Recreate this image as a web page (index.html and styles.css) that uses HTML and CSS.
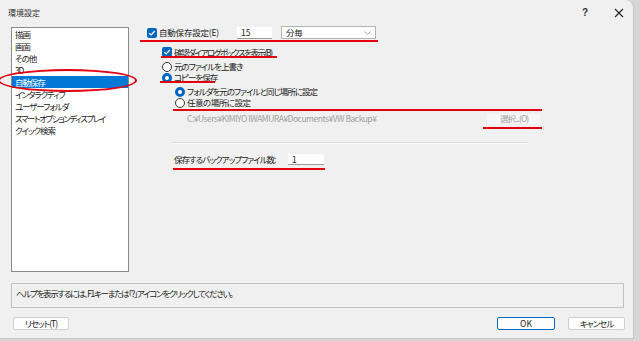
FILE: index.html
```html
<!DOCTYPE html>
<html lang="ja">
<head>
<meta charset="utf-8">
<title>環境設定</title>
<link rel="stylesheet" href="styles.css">
</head>
<body>
<div class="window">
  <div class="titlebar">
    <span class="title">環境設定</span>
    <span class="help-q">?</span>
    <svg class="close" width="10" height="10" viewBox="0 0 10 10"><path d="M1 1L9 9M9 1L1 9" stroke="#222" stroke-width="1.1" fill="none"/></svg>
  </div>
  <div class="main">
    <ul class="list">
      <li>描画</li>
      <li>画面</li>
      <li>その他</li>
      <li>3D</li>
      <li class="sel">自動保存</li>
      <li>インタラクティブ</li>
      <li>ユーザーフォルダ</li>
      <li class="tight">スマートオプションディスプレイ</li>
      <li>クイック検索</li>
    </ul>
    <div class="panel">
      <div class="row r1">
        <span class="cb"><svg width="8" height="8" viewBox="0 0 8 8"><path d="M1.3 4.2L3.2 6L6.8 2" stroke="#fff" stroke-width="1.2" fill="none"/></svg></span>
        <span class="lbl l1 kj">自動保存設定(E)</span>
        <span class="tb tb15">15</span>
        <span class="select kj">分毎<svg class="chev" width="7" height="4" viewBox="0 0 7 4"><path d="M0.5 0.5L3.5 3.3L6.5 0.5" stroke="#999" stroke-width="0.9" fill="none"/></svg></span>
      </div>
      <div class="row r2">
        <span class="cb"><svg width="8" height="8" viewBox="0 0 8 8"><path d="M1.3 4.2L3.2 6L6.8 2" stroke="#fff" stroke-width="1.2" fill="none"/></svg></span>
        <span class="lbl tight">確認ダイアログボックスを表示(B)</span>
      </div>
      <div class="radios r3">
        <div class="row rr"><span class="rb"></span><span class="lbl">元のファイルを上書き</span></div>
        <div class="row rr"><span class="rb on"></span><span class="lbl">コピーを保存</span></div>
      </div>
      <div class="radios r4">
        <div class="row rr"><span class="rb on"></span><span class="lbl">フォルダを元のファイルと同じ場所に設定</span></div>
        <div class="row rr"><span class="rb"></span><span class="lbl kj2">任意の場所に設定</span></div>
      </div>
      <div class="row pathrow">
        <span class="path">C:¥Users¥KIMIYO IWAMURA¥Documents¥VW Backup¥</span>
        <span class="btn dis">選択...(O)</span>
      </div>
      <div class="sep"></div>
      <div class="row backup">
        <span class="lbl lb">保存するバックアップファイル数:</span>
        <span class="tb tb1">1</span>
      </div>
    </div>
  </div>
  <div class="helpbox">ヘルプを表示するには、F1キーまたは「?」アイコンをクリックしてください。</div>
  <div class="buttons">
    <span class="btn reset">リセット(T)</span>
    <span class="spacer"></span>
    <span class="btn ok">OK</span>
    <span class="btn cancel">キャンセル</span>
  </div>

  <div class="mark u1"></div>
  <div class="mark u2"></div>
  <div class="mark u3"></div>
  <div class="mark u4"></div>
  <div class="mark u5"></div>
  <div class="mark u6"></div>
  <div class="ellipse"></div>
</div>
</body>
</html>
```
FILE: styles.css
```css
* { box-sizing: border-box; }
html, body { margin: 0; padding: 0; }
body {
  background: #d6d6d6;
  width: 640px;
  height: 341px;
  overflow: hidden;
  font-family: "Noto Sans CJK JP", "Noto Sans", sans-serif;
  font-size: 8.5px;
  line-height: 11px;
  letter-spacing: -1px;
  color: #222;
  font-feature-settings: "palt";
}
.window {
  position: relative;
  width: 634px;
  height: 339px;
  background: #f0f0f0;
  border-right: 1px solid #c4c4c4;
  border-bottom: 1px solid #c4c4c4;
  border-top-right-radius: 8px;
  display: flex;
  flex-direction: column;
}
.titlebar {
  height: 25px;
  display: flex;
  align-items: center;
  padding-left: 8px;
}
.title { font-size: 8px; letter-spacing: 0; color: #333; flex: 1; }
.help-q { font-family: "Liberation Sans", sans-serif; font-size: 10px; font-weight: bold; letter-spacing: 0; color: #333; margin-right: 26px; }
.close { margin-right: 9px; }

.main {
  display: flex;
  padding-left: 11px;
  padding-top: 2px;
  height: 258px;
}
.list {
  list-style: none;
  margin: 0;
  padding: 0;
  width: 118px;
  height: 245px;
  background: #fff;
  border: 1px solid #8a8a8a;
}
.list li {
  height: 12px;
  line-height: 12px;
  padding-left: 3px;
  white-space: nowrap;
  color: #222;
  letter-spacing: -1.1px;
}
.list li.sel { background: #0078d7; color: #fff; }
.list li.tight, .tight { letter-spacing: -1.45px; }
.kj { letter-spacing: -0.2px; }
.kj2 { letter-spacing: -0.5px; }

.panel {
  width: 395px;
  margin-left: 18px;
  display: flex;
  flex-direction: column;
}
.row { display: flex; align-items: center; white-space: nowrap; }
.r1 { height: 13px; margin-top: -1px; }
.l1 { width: 78px; }
.cb {
  width: 10px; height: 10px; border-radius: 2px;
  background: #0067c0;
  display: inline-flex; align-items: center; justify-content: center;
  margin-right: 2px;
}
.tb {
  height: 12px; background: #fff;
  border-bottom: 1px solid #9a9a9a;
  padding-left: 4px;
  line-height: 11px;
  letter-spacing: 0;
}
.tb15 { width: 35px; }
.select {
  margin-left: 9px;
  width: 95px; height: 13px;
  background: #fff;
  border: 1px solid #b4b4b4;
  padding-left: 4px;
  line-height: 11px;
  display: flex; align-items: center;
}
.chev { margin-left: auto; margin-right: 4px; }

.r2 { height: 12px; margin-top: 7px; padding-left: 15px; }
.radios { display: flex; flex-direction: column; }
.r3 { margin-top: 3px; padding-left: 15px; }
.r4 { margin-top: 3px; padding-left: 28px; }
.rr { height: 11px; }
.rb {
  width: 10px; height: 10px; border-radius: 50%;
  border: 1px solid #333; background: #fff;
  margin-right: 2px;
}
.rb.on { border: 3px solid #0067c0; }

.pathrow { height: 13px; margin-top: 4px; padding-left: 40px; }
.path { color: #a0a0a0; letter-spacing: -0.5px; }
.btn {
  display: inline-flex; align-items: center; justify-content: center;
  height: 12px;
  background: #fdfdfd;
  border: 1px solid #d0d0d0;
  border-radius: 2px;
}
.btn.dis { margin-left: auto; width: 56px; color: #a0a0a0; border-color: #efefef; background: #f7f7f7; }

.sep { margin: 17px 14px 0 26px; height: 2px; background: #d8d8d8; border-bottom: 1px solid #fafafa; }
.backup { height: 11px; margin-top: 10px; padding-left: 27px; }
.lb { width: 114px; }
.tb1 { width: 36px; height: 11px; }

.helpbox {
  margin: 0 9px 0 11px;
  height: 25px;
  border: 1px solid #c2c2c2;
  padding: 4px 4px 0 4px;
  letter-spacing: -1.3px;
}
.buttons { display: flex; margin-top: 9px; padding: 0 8px 0 13px; }
.spacer { flex: 1; }
.reset { width: 56px; height: 13px; }
.ok { width: 58px; height: 13px; border: 1px solid #0067c0; letter-spacing: 0; }
.cancel { width: 57px; height: 13px; margin-left: 13px; }

.mark { position: absolute; height: 2px; background: #e00010; }
.u1 { left: 140px; top: 40px; width: 238px; }
.u2 { left: 161px; top: 56px; width: 116px; }
.u3 { left: 160px; top: 81px; width: 55px; }
.u4 { left: 173px; top: 109px; width: 369px; }
.u5 { left: 483px; top: 127px; width: 59px; }
.u6 { left: 173px; top: 168px; width: 152px; }
.ellipse {
  position: absolute;
  left: -2px; top: 69px;
  width: 139px; height: 23px;
  border: 2px solid #e00010;
  border-radius: 50%;
}
```
